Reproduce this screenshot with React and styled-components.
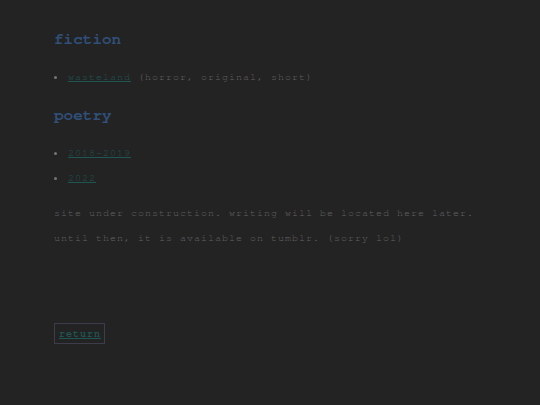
import React from "react";
import styled, { createGlobalStyle } from "styled-components";

const Global = createGlobalStyle`
  html, body { margin: 0; padding: 0; background: #232323; }
  body { font-family: "Nimbus Mono PS", "FreeMono", "Courier", "Liberation Mono", "Courier New", monospace; }
`;

const Page = styled.main`
  padding: 29px 54px;
  display: flex;
  flex-direction: column;
  align-items: flex-start;
  color: #626262;
  font-size: 10px;
  letter-spacing: 1px;
`;

const Heading = styled.h2`
  margin: 0;
  font-size: 16px;
  line-height: 20px;
  font-weight: bold;
  letter-spacing: 0;
  color: #30507a;
`;

const List = styled.ul`
  list-style: disc inside;
  margin: ${(p) => p.$top}px 0 ${(p) => p.$bottom}px;
  padding: 0;
  li::marker { color: #757575; }
`;

const Item = styled.li`
  line-height: 25px;
`;

const Link = styled.a`
  color: #1f5552;
  text-decoration: underline;
`;

const Para = styled.p`
  margin: 0;
  line-height: 25px;
`;

const Return = styled.a`
  margin-top: ${(p) => p.$top}px;
  border: 1px solid #3d3c4b;
  padding: 4px 3px 3px 4px;
  line-height: 12px;
  font-weight: bold;
  color: #1f5552;
  text-decoration: underline;
`;

export default function App() {
  return (
    <>
      <Global />
      <Page>
        <Heading>fiction</Heading>
        <List $top={16} $bottom={15}>
          <Item>
            <Link href="#">wasteland</Link> (horror, original, short)
          </Item>
        </List>
        <Heading>poetry</Heading>
        <List $top={16} $bottom={10}>
          <Item>
            <Link href="#">2018-2019</Link>
          </Item>
          <Item>
            <Link href="#">2022</Link>
          </Item>
        </List>
        <Para>site under construction. writing will be located here later.</Para>
        <Para>until then, it is available on tumblr. (sorry lol)</Para>
        <Return href="#" $top={72}>return</Return>
      </Page>
    </>
  );
}
